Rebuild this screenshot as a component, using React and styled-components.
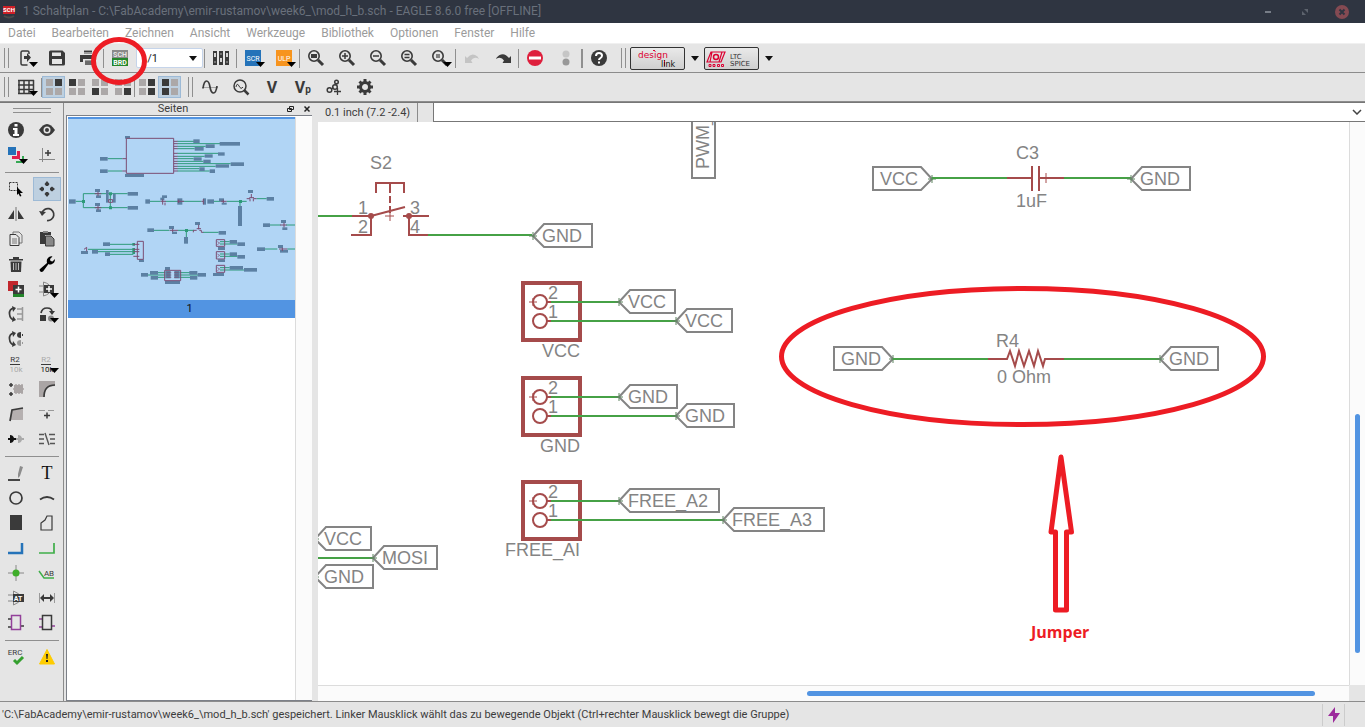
import { useState } from "react"
import styled, { createGlobalStyle } from "styled-components"

const DARK = "#3a3a3a"
const GREY = "#8f8f8f"
const RED = "#ed1c24"

const IconText = styled.text`
font-family: Roboto, "Liberation Sans", sans-serif;
font-size: ${props => props.$size}px;
font-weight: ${props => props.$bold ? 700 : 400};
text-anchor: middle;`

const icons = {
    export: <>
        <path d="M11 4V2.500q0-1.500-1.500-1.500H4.500Q3 1 3 2.500v11q0 1.500 1.500 1.500h5" fill="none" stroke={DARK} strokeWidth="1.500" />
        <path d="M6 6h3V3l4 4.500-4 4.500V9H6z" fill={DARK} />
    </>,
    save: <path fillRule="evenodd" fill={DARK} d="M0 2q0-1.500 1.500-1.500h12L16 3v11q0 1.500-1.500 1.500h-13Q0 15.500 0 14zM3 2.500V6h9V2.500zM3 9v5h10V9z" />,
    print: <>
        <path d="M4 0h8v4H4zM5 10h7v5H5z" fill="#9a9a9a" />
        <path d="M0 5h16v7h-3V9H3v3H0z" fill={DARK} />
        <path d="M4 1.500h8M5 12h7M5 14h7" stroke={DARK} />
    </>,
    schbrd: <>
        <rect width="16" height="8" fill="#8a8a8a" />
        <rect y="8" width="16" height="8" fill="#23862b" />
        <IconText x="8" y="7" $size={7} $bold fill="#e8e8e8">SCH</IconText>
        <IconText x="8" y="15" $size={7} $bold fill="#fff">BRD</IconText>
    </>,
    sheets: <>
        <path d="M0 1h4v14H0zM6 1h4v14H6zM12 1h4v14h-4z" fill={DARK} />
        <path d="M1 3h2v4H1zM7 8h2v4H7zM13 3h2v4h-2z" fill="#d5d5d5" />
        <path d="M1 12h2M7 4h2M13 12h2" stroke="#aaa" />
    </>,
    scr: <>
        <rect width="16" height="16" fill="#2573b9" />
        <IconText x="8" y="11" $size={7} fill="#fff">SCR</IconText>
    </>,
    ulp: <>
        <rect width="16" height="16" fill="#f7941e" />
        <IconText x="8" y="11" $size={7} fill="#fff">ULP</IconText>
    </>,
    zoomfit: <><Lens /><path d="M3 4h6v4H3z" fill={DARK} /></>,
    zoomin: <><Lens /><path d="M3 6h6M6 3v6" stroke={DARK} strokeWidth="1.500" /></>,
    zoomout: <><Lens /><path d="M3 6h6" stroke={DARK} strokeWidth="1.500" /></>,
    zoomredraw: <><Lens /><path d="M3.500 4.500h5M3.500 7.500h5" stroke={DARK} strokeWidth="1.500" /></>,
    zoomsel: <><Lens /><path d="M4 4h4v4H4z" fill={DARK} opacity=".6" /></>,
    undo: <path d="M1 13V6l2 2q4-5 8-3 3 1 4 4-5-3-8 1.500l1.500 2.500z" fill="#c4c4c4" />,
    redo: <path d="M16 13V6l-2 2Q10 3 6 4.500 2 6 1 9q5-3 8 1.500L7.500 13z" fill={DARK} />,
    stop: <><circle cx="8" cy="8" r="8" fill="#de1f3c" /><path d="M2 6.500h12v3H2z" fill="#fff" /></>,
    lights: <><circle cx="8" cy="4" r="3.500" fill="#c6c6c6" /><circle cx="8" cy="12" r="3.500" fill="#989898" /></>,
    help: <>
        <circle cx="8" cy="8" r="8" fill={DARK} />
        <path d="M5 6q0-3 3-3t3 2.500Q11 7 9.500 8 8 9 8 10" fill="none" stroke="#fff" strokeWidth="2" />
        <path d="M7 11.500h2v2H7z" fill="#fff" />
    </>,
    grid: <path d="M1 1v14M6 1v14M11 1v14M15.500 1v14M0 1.500h16M0 6h16M0 10.500h16M0 14.500h16" stroke={DARK} strokeWidth="1.500" />,
    wave: <>
        <path d="M0 8.500h16" stroke="#a5a5a5" />
        <path d="M1 9.500Q2 2 4.500 2T8 8t3.500 6T15 7" fill="none" stroke={DARK} strokeWidth="1.700" />
    </>,
    probe: <>
        <circle cx="7" cy="7" r="6" fill="none" stroke={DARK} strokeWidth="1.500" />
        <path d="M3 8q1-5 3-1t4 1" fill="none" stroke={DARK} />
        <path d="M11 11l4.500 4.500" stroke={DARK} strokeWidth="2.500" />
    </>,
    volt: <IconText x="8" y="14" $size={16} $bold fill={DARK}>V</IconText>,
    vp: <>
        <IconText x="5" y="14" $size={16} $bold fill={DARK}>V</IconText>
        <IconText x="13" y="14" $size={10} $bold fill={DARK}>p</IconText>
    </>,
    link: <>
        <circle cx="3.500" cy="11" r="2.300" fill="none" stroke={DARK} strokeWidth="1.500" />
        <circle cx="9" cy="8" r="2.300" fill="none" stroke={DARK} strokeWidth="1.500" />
        <circle cx="10.500" cy="3" r="1.800" fill="none" stroke={DARK} strokeWidth="1.500" />
        <path d="M5 10l3-1M10 6v-1M11.500 9v7M8 12.500h7" stroke={DARK} strokeWidth="1.300" />
    </>,
    gear: <>
        <circle cx="8" cy="8" r="4.500" fill="none" stroke={DARK} strokeWidth="3" />
        <path d="M8 0v3M8 13v3M0 8h3M13 8h3M2.500 2.500l2 2M11.500 11.500l2 2M2.500 13.500l2-2M11.500 4.500l2-2" stroke={DARK} strokeWidth="3" />
    </>,
    info: <>
        <circle cx="8" cy="8" r="8" fill={DARK} />
        <path d="M6.500 2h3v2.500h-3zM5 6h4.500v6H11v2H5v-2h1.500V8H5z" fill="#fff" />
    </>,
    eye: <>
        <path d="M0 8q8-12 16 0-8 12-16 0z" fill={DARK} />
        <circle cx="8" cy="8" r="3.500" fill="#e5e5e5" />
        <circle cx="8" cy="8" r="2" fill={DARK} />
    </>,
    layers: <>
        <path d="M0 0h8v8H0z" fill="#2573b9" />
        <path d="M4 9h8v3H4zM9 4h3v8H9z" fill="#e0204f" />
        <path d="M8 14h8v2H8zM14 9h2v7h-2z" fill="#35a853" />
    </>,
    mark: <>
        <path d="M3.500 1v14M0 12.500h16" stroke="#888" />
        <path d="M6 6h6M9 3v6" stroke={DARK} strokeWidth="1.500" />
    </>,
    group: <>
        <path d="M1.500 1.500h8v8h-8z" fill="none" stroke={DARK} strokeDasharray="2 1" />
        <path d="M9 6l6 6h-3l1.500 3-1.500.500-1.500-3L9 14z" fill="#000" />
    </>,
    move: <path d="M8 0l2.500 3L9 5H7L5.500 3zM8 16l2.500-3L9 11H7l-1.500 2zM0 8l3-2.500L5 7v2l-2 1.500zM16 8l-3-2.500L11 7v2l2 1.500z" fill={DARK} />,
    mirror: <>
        <path d="M8 1v14" stroke="#999" strokeWidth="1.500" />
        <path d="M6 4v9H0zM10 4v9h6z" fill={DARK} />
    </>,
    rotate: <>
        <path d="M3 7a6 6 0 1 1 5 7.500" fill="none" stroke={DARK} strokeWidth="1.700" />
        <path d="M0 5l3 5 4-4z" fill={DARK} />
    </>,
    copy: <>
        <path d="M5 3V1h6l3 3v8h-3" fill="none" stroke="#777" />
        <path d="M2 3.500h6l3 3v8H2z" fill="#e9e9e9" stroke={DARK} />
        <path d="M4 8h5M4 10h5M4 12h5" stroke="#777" />
    </>,
    paste: <>
        <path d="M1 1h11v3H6v9H1z" fill={DARK} />
        <path d="M6.500 5H12l3 3v7H6.500z" fill="#888" stroke={DARK} />
        <path d="M4 0h5v2H4z" fill="#888" />
    </>,
    trash: <>
        <path d="M1 3h14v1.500H1zM5 1h6v2H5z" fill={DARK} />
        <path d="M2.500 5.500h11L13 16H3z" fill={DARK} />
        <path d="M5.500 7v7M8 7v7M10.500 7v7" stroke="#bbb" />
    </>,
    wrench: <path d="M1 13l7-6q-1-4 2-6 2-1 3.500-.500L11 3l.500 2 2 .500L16 3q0 4-3 5-2 1-3.500 0L4 15.500q-2 1-3-.500t0-2z" fill="#000" />,
    add: <>
        <path d="M0 0h10v10H0z" fill="#c1272d" />
        <path d="M5 12h11v4H5z" fill="#23862b" />
        <path d="M5 4h11v9H5z" fill={DARK} />
        <path d="M7.500 8.500h6M10.500 5.500v6" stroke="#fff" strokeWidth="1.500" />
    </>,
    invoke: <>
        <path d="M0 5h5M0 11h5M4.500 1v14q7-2 8-7-1-5-8-7z" fill="none" stroke="#888" />
        <path d="M5 4h10v8H5z" fill={DARK} />
        <path d="M7 8h6M10 5v6" stroke="#fff" strokeWidth="1.500" />
    </>,
    pinswap: <>
        <path d="M6 2Q1 3 1.500 8T6 14" fill="none" stroke={DARK} strokeWidth="1.700" />
        <path d="M4 0l4 2-3 4zM4 16l4-2-3-4z" fill={DARK} />
        <path d="M9 3h6M9 8h6M9 13h6M14.500 1v14" stroke="#999" strokeWidth="1.500" />
    </>,
    replace: <>
        <path d="M2 7q1-5 6-5t5 4" fill="none" stroke={DARK} strokeWidth="1.700" />
        <path d="M10 5h6l-3 4zM1 9h6v6H1z" fill={DARK} />
        <circle cx="12" cy="12.500" r="3" fill="#888" />
    </>,
    gateswap: <>
        <path d="M6 2Q1 3 1.500 8T6 14" fill="none" stroke={DARK} strokeWidth="1.700" />
        <path d="M4 0l4 2-3 4zM4 16l4-2-3-4z" fill={DARK} />
        <path d="M13 1v6q-4 0-4-3t4-3zM14 3v2h1V3z" fill={DARK} />
        <path d="M13 9v6q-4 0-4-3t4-3zM14 11v2h1v-2z" fill="#999" />
    </>,
    name: <>
        <IconText x="7" y="6" $size={8} fill={DARK}>R2</IconText>
        <path d="M2 8.500h10" stroke={DARK} />
        <IconText x="8" y="16" $size={8} fill="#aaa">10k</IconText>
    </>,
    value: <>
        <IconText x="7" y="6" $size={8} fill="#aaa">R2</IconText>
        <path d="M2 8.500h10" stroke={DARK} />
        <IconText x="8" y="16" $size={8} fill="#111">10k</IconText>
    </>,
    smash: <>
        <path d="M1 4h4M3 2v4M1 13h4M3 11v4" stroke={DARK} strokeWidth="1.500" />
        <path d="M6 4h9v8H6z" fill="#aaa5a5" />
        <path d="M8 4v-1M11 4v-1M14 4v-1M8 13v-1M11 13v-1M14 13v-1M5 8h11" stroke="#aaa5a5" strokeWidth="1.500" />
    </>,
    miter: <>
        <path d="M0 0h16v5Q5 5 5 16H0z" fill="#aaa5a5" />
        <path d="M5 16Q5 4 16 4" fill="none" stroke={DARK} strokeWidth="1.700" />
    </>,
    split: <>
        <path d="M4 4l11-2v12H2z" fill="#b5b0b0" />
        <path d="M2 15L4 4l11-2" fill="none" stroke={DARK} strokeWidth="1.700" />
    </>,
    optimize: <>
        <path d="M0 4.500h6M9 4.500h6" stroke="#999" />
        <path d="M5 9.500h6M8 6.500v6" stroke={DARK} strokeWidth="1.500" />
    </>,
    gates: <>
        <path d="M0 7h2V4q3 0 4 3h2v2H6q-1 3-4 3V9H0z" fill="#111" />
        <path d="M8 7h2V4q3 0 4 3h2v2h-2q-1 3-4 3V9H8z" fill="#aaa" />
    </>,
    ripup: <path d="M0 3.500h5M0 8h5M0 12.500h5M6 2l4 12M10 3.500h6M11 8h5M11 12.500h5" stroke="#555" strokeWidth="1.400" fill="none" />,
    wire: <>
        <path d="M0 15h12" stroke="#111" strokeWidth="1.500" />
        <path d="M12 1l3 1-3 9-2 2v-4z" fill="#8c8c8c" />
    </>,
    text: <SerifText x="8" y="14" fill="#111">T</SerifText>,
    circle: <circle cx="8" cy="8" r="6" fill="none" stroke={DARK} strokeWidth="1.700" />,
    arc: <path d="M1 9.500q7-5 14 0" fill="none" stroke={DARK} strokeWidth="1.800" />,
    rect: <path d="M2 0h12v15H2z" fill={DARK} />,
    polygon: <path d="M2 15V8l4-3 2-4h5v14z" fill="none" stroke={DARK} strokeWidth="1.200" />,
    bus: <path d="M0 13h14V3" fill="none" stroke="#2573b9" strokeWidth="2.500" />,
    net: <path d="M0 13h15V3" fill="none" stroke="#3fae49" strokeWidth="1.700" />,
    junction: <>
        <path d="M8 0v16M0 8h16" stroke="#888" />
        <circle cx="8" cy="8" r="3.500" fill="#3fae2a" />
    </>,
    label: <>
        <path d="M0 6l5 7h10" fill="none" stroke="#3fae49" strokeWidth="1.500" />
        <IconText x="10" y="11" $size={8} fill={DARK}>AB</IconText>
    </>,
    attribute: <>
        <path d="M0 5h5M0 11h5M5.500 1v14q6-2 8-7-2-5-8-7z" fill="none" stroke="#888" />
        <path d="M5 4h11v8H5z" fill={DARK} />
        <IconText x="10" y="11" $size={7} $bold fill="#fff">AT</IconText>
    </>,
    dimension: <>
        <path d="M.500 3v10M15.500 3v10" stroke="#999" />
        <path d="M1 8l4-4v3h6V4l4 4-4 4V9H5v3z" fill={DARK} />
    </>,
    module: <>
        <path d="M0 4h3M0 12h3M13 11h3" stroke={DARK} strokeWidth="1.500" />
        <path d="M3.500.500h9v14h-9z" fill="none" stroke="#93409a" strokeWidth="1.500" />
    </>,
    port: <>
        <path d="M0 4h3M0 12h3M13 11h3" stroke="#93409a" strokeWidth="1.500" />
        <path d="M3.500.500h9v14h-9z" fill="none" stroke={DARK} strokeWidth="1.500" />
    </>,
    erc: <>
        <IconText x="7" y="6" $size={8} fill={DARK}>ERC</IconText>
        <path d="M6 11l3 3 6-6" fill="none" stroke="#35a02f" strokeWidth="3" />
    </>,
    errors: <>
        <path d="M8 .500L15.500 15H.500z" fill="#fecc00" stroke="#fecc00" strokeLinejoin="round" />
        <path d="M7 5h2l-.500 5h-1zM7 11h2v2H7z" fill="#222" />
    </>
}

const toolGroups = [
    [
        { icon: "info" }, { icon: "eye" },
        { icon: "layers", arrow: true }, { icon: "mark" }
    ],
    [
        { icon: "group" }, { icon: "move", active: true },
        { icon: "mirror" }, { icon: "rotate" },
        { icon: "copy" }, { icon: "paste" },
        { icon: "trash" }, { icon: "wrench" },
        { icon: "add" }, { icon: "invoke", arrow: true },
        { icon: "pinswap" }, { icon: "replace", arrow: true },
        { icon: "gateswap" }, null,
        { icon: "name" }, { icon: "value", arrow: true },
        { icon: "smash" }, { icon: "miter" },
        { icon: "split" }, { icon: "optimize" },
        { icon: "gates" }, { icon: "ripup" }
    ],
    [
        { icon: "wire" }, { icon: "text" },
        { icon: "circle" }, { icon: "arc" },
        { icon: "rect" }, { icon: "polygon" },
        { icon: "bus" }, { icon: "net" },
        { icon: "junction" }, { icon: "label" },
        { icon: "attribute" }, { icon: "dimension" },
        { icon: "module" }, { icon: "port" }
    ],
    [{ icon: "erc" }, { icon: "errors" }]
]

const menus = ["Datei", "Bearbeiten", "Zeichnen", "Ansicht", "Werkzeuge", "Bibliothek", "Optionen", "Fenster", "Hilfe"]

function SerifText(props) {
    return <text fontFamily="Liberation Serif, serif" fontSize="18" textAnchor="middle" {...props} />
}

function Lens() {
    return <>
        <circle cx="6" cy="6" r="5.200" fill="none" stroke={DARK} strokeWidth="1.600" />
        <path d="M10 10l5 5" stroke={DARK} strokeWidth="3" />
    </>
}

function Tool({ icon, arrow, active, narrow, children }) {
    return <ToolButton type="button" aria-label={icon} $active={active} $narrow={narrow}>
        <Glyph viewBox="0 0 16 16">
            {icons[icon]}
            {arrow && <path d="M11 12h9l-4.500 5z" fill="#000" />}
        </Glyph>
        {children}
    </ToolButton>
}

// four squares, the dark ones show which quadrants are picked
function Quad({ dark, active }) {
    const spots = [[0, 0], [9, 0], [0, 9], [9, 9]]
    return <ToolButton type="button" aria-label="quad" $active={active} $narrow>
        <Glyph viewBox="0 0 16 16">
            {spots.map(([x, y], i) => (
                <rect key={i} x={x} y={y} width="7" height="7" fill={dark.includes(i) ? DARK : "#aca8a8"} />
            ))}
        </Glyph>
    </ToolButton>
}

function Tag({ x, y, end, text }) {
    const dir = end > x ? 1 : -1
    const neck = x + dir * 11
    return <g>
        <Outline d={`M${x} ${y}L${neck} ${y - 12}H${end}V${y + 11}H${neck}Z`} />
        <path d={`M${x} ${y - 4}v8M${x - 4} ${y}h8`} stroke="#5f8560" />
        <Label x={dir > 0 ? x + 9 : end + 7} y={y + 6}>{text}</Label>
    </g>
}

function Connector({ y, name, tags }) {
    return <g>
        <Part d={`M523 ${y - 19}h57v57h-57z`} $width={4} />
        {tags.map((tag, i) => (
            <g key={i}>
                <Wire d={`M549 ${y + i * 19}H${tag.x}`} />
                <Part d={`M547 ${y + i * 19}h4`} />
                <circle cx="540" cy={y + i * 19} r="7" fill="none" stroke="#a54b4b" strokeWidth="2" />
                <Label x="548" y={y + i * 19 - 3}>{2 - i}</Label>
                <Tag x={tag.x} y={y + i * 19} end={tag.end} text={tag.text} />
            </g>
        ))}
        <Part d={`M529 ${y}h8M533 ${y - 4}v8`} $width={1} />
        <Label x="580" y={y + 55} textAnchor="end">{name}</Label>
    </g>
}

function Schematic() {
    return <Drawing>
        <g transform="translate(-318 -122)">
            <Outline d="M692 110V178H715V110" />
            <Label transform="translate(709 169) rotate(-90)">PWM_</Label>

            <Label x="370" y="169">S2</Label>
            <Wire d="M318 216H353M428 235H532" />
            <Part d="M376 193V183H404V193M390 183V193M390 196V203M390 206V213M352 216H371V235H351M371 216L405 207M403 216H429M409 216V235H428" />
            <Part d="M385 216h9M390 212v9" $width={1} />
            <circle cx="371" cy="216" r="3" fill="#a54b4b" />
            <circle cx="409" cy="216" r="3" fill="#a54b4b" />
            <Label x="358" y="214">1</Label>
            <Label x="358" y="233">2</Label>
            <Label x="410" y="214">3</Label>
            <Label x="410" y="233">4</Label>
            <Tag x={533} y={236} end={592} text="GND" />

            <Connector y={302} name="VCC" tags={[{ x: 619, end: 675, text: "VCC" }, { x: 676, end: 732, text: "VCC" }]} />
            <Connector y={397} name="GND" tags={[{ x: 619, end: 677, text: "GND" }, { x: 676, end: 734, text: "GND" }]} />
            <Connector y={501} name="FREE_AI" tags={[{ x: 619, end: 719, text: "FREE_A2" }, { x: 723, end: 824, text: "FREE_A3" }]} />

            <Wire d="M318 558H373" />
            <Tag x={315} y={539} end={371} text="VCC" />
            <Tag x={373} y={558} end={437} text="MOSI" />
            <Tag x={315} y={577} end={373} text="GND" />

            <Tag x={932} y={179} end={873} text="VCC" />
            <Wire d="M932 178H1007M1064 178H1131" />
            <Part d="M1007 178H1032M1032 166V191M1039 166V191M1039 178H1064" />
            <Part d="M1046 173v10" $width={1} />
            <Label x="1016" y="159">C3</Label>
            <Label x="1016" y="207">1uF</Label>
            <Tag x={1131} y={179} end={1190} text="GND" />

            <Tag x={893} y={359} end={834} text="GND" />
            <Wire d="M893 359H988M1064 359H1160" />
            <Part d="M988 359H1007L1010 351 1015 366 1019 351 1024 366 1029 351 1034 366 1038 351 1043 366 1045 359H1064" />
            <Label x="996" y="347">R4</Label>
            <Label x="997" y="383">0 Ohm</Label>
            <Tag x={1160} y={359} end={1218} text="GND" />

            <ellipse cx="1022.500" cy="356.500" rx="241" ry="68" fill="none" stroke={RED} strokeWidth="5" />
            <path d="M1061 457L1051 532H1055.500V610H1066.500V532H1071.500Z" fill="none" stroke={RED} strokeWidth="5" strokeLinejoin="round" />
            <Note x="1031" y="638">Jumper</Note>
        </g>
    </Drawing>
}

function Thumbnail() {
    const boxes = [
        [183, 108, 15, 8], [183, 222, 57, 9], [108, 171, 23, 11], [108, 208, 23, 11],
        [388, 118, 19, 11], [467, 126, 61, 11], [425, 133, 27, 11], [392, 141, 27, 11],
        [462, 157, 20, 10], [422, 163, 24, 10], [389, 172, 24, 10], [418, 179, 22, 10],
        [500, 187, 40, 11], [455, 193, 40, 10], [406, 202, 16, 11], [437, 208, 16, 11],
        [15, 298, 20, 13], [93, 267, 15, 9], [96, 286, 15, 8], [93, 309, 15, 9], [96, 328, 15, 8],
        [126, 270, 8, 38], [147, 281, 8, 27], [191, 276, 31, 11], [191, 318, 31, 11],
        [244, 298, 14, 13], [294, 286, 15, 8], [289, 293, 12, 8], [340, 295, 15, 19], [417, 295, 9, 19],
        [430, 298, 20, 13], [465, 295, 15, 9], [473, 308, 15, 6], [552, 270, 15, 9], [608, 291, 22, 11],
        [522, 318, 12, 60], [250, 385, 20, 11], [315, 378, 15, 9], [324, 395, 15, 7], [393, 366, 15, 9],
        [464, 393, 22, 11], [360, 411, 12, 20], [597, 370, 21, 11], [651, 360, 15, 9], [655, 382, 15, 8],
        [579, 442, 24, 11], [642, 435, 15, 9], [648, 450, 24, 8],
        [117, 427, 21, 11], [84, 450, 18, 11], [51, 453, 21, 9], [123, 457, 15, 11], [225, 478, 15, 8],
        [497, 420, 22, 11], [520, 427, 23, 11], [462, 441, 21, 9],
        [497, 457, 22, 11], [520, 465, 23, 11], [462, 478, 21, 8],
        [497, 498, 40, 11], [540, 504, 39, 11], [447, 519, 33, 9],
        [231, 519, 21, 11], [258, 513, 24, 11], [260, 528, 22, 11], [303, 501, 15, 9], [303, 543, 45, 9],
        [376, 513, 24, 11], [378, 528, 22, 11], [401, 519, 25, 11], [304, 513, 16, 22], [331, 513, 16, 22]
    ]
    return <Preview viewBox="12 57 681 543">
        <g stroke="#2d9a79" strokeWidth="3" fill="none">
            <path d="M131 176H175M131 213H175M340 124H390M340 131H468M340 139H425M340 146H392M340 160H462M340 169H422M340 176H389M340 184H418M340 191H500M340 199H455M340 206H406M340 213H437" />
            <path d="M35 304H58M58 281V323M58 281H191M58 323H191M139 281V323M258 304H290M305 304H412M450 304H470M488 304H548M578 296H608M528 304V320" />
            <path d="M270 391H316M342 391H390M367 391V412M417 397H464M618 375H650M666 375H693M603 447H640M670 447H693" />
            <path d="M138 433H208M72 448H208M102 455H208M138 463H208M468 425H497M468 432H520M468 462H497M468 469H520M468 503H497M468 510H540M252 525H304M280 518H304M280 532H304M346 518H378M346 525H402M346 532H378" />
        </g>
        <g fill="#2d9a79">
            <path d="M54 300h9v9h-9zM135 277h9v9h-9zM135 319h9v9h-9zM525 300h9v9h-9zM363 387h9v9h-9zM205 429h8v8h-8zM205 444h8v18h-8z" />
        </g>
        <g fill="#5c80a3">
            {boxes.map(([x, y, w, h], i) => <rect key={i} x={x} y={y} width={w} height={h} />)}
        </g>
        <g stroke="#7b4d73" strokeWidth="3" fill="none">
            <path d="M187 115H329V220H187ZM175 176H187M175 213H187M329 124h12M329 131h12M329 139h12M329 146h12M329 160h12M329 169h12M329 176h12M329 184h12M329 191h12M329 199h12M329 206h12M329 213h12" />
            <path d="M92 281H112M102 275V288M92 323H112M102 317V330M134 299h12v8h-12zM290 304H306M296 298V314M303 308v8M340 304h20M344 299v10M412 304h5M418 297v16M470 304h18M478 299v10M548 296H558V304M568 304V296H578M556 293H570M562 282V294" />
            <path d="M317 391h25M326 386v10M388 397V391H398M406 391H412V397H418M398 386H411M404 374V388M60 448L68 442V454M648 375h20M660 368V382M645 447h25M655 443v10" />
            <path d="M220 424H238V478H220ZM208 433H226M208 448H226M208 455H226M208 469H226M457 419H482V439H457ZM457 455H482V477H457ZM457 496H482V517H457ZM302 511H350V542H302Z" />
            <path d="M460 425l7 4-7 5M460 462l7 4-7 5M460 503l7 4-7 5M308 518H322M308 525H322M308 532H322M330 518H344M330 525H344M330 532H344" strokeWidth="2" />
        </g>
    </Preview>
}

export default function App() {
    const [sheet, setSheet] = useState("1/1")
    const [command, setCommand] = useState("")

    return <Window>
        <GlobalStyle />
        <TitleBar>
            <AppIcon viewBox="0 0 14 14">
                <path d="M2 11q5 3 10 0" fill="none" stroke="#4a4a4a" strokeWidth="2" />
                <rect x="1" y="1" width="12" height="8" fill="#cf2027" />
                <IconText x="7" y="7" $size={6} $bold fill="#fff">SCH</IconText>
            </AppIcon>
            <Title>1 Schaltplan - C:\FabAcademy\emir-rustamov\week6_\mod_h_b.sch - EAGLE 8.6.0 free [OFFLINE]</Title>
            <WindowButton type="button" aria-label="Minimieren">
                <Glyph viewBox="0 0 16 16"><path d="M5 8h6" stroke="#777d87" strokeWidth="2" /></Glyph>
            </WindowButton>
            <WindowButton type="button" aria-label="Maximieren">
                <Glyph viewBox="0 0 16 16"><path d="M7 5h4v4zM5 7v4h4z" fill="#5d636d" /></Glyph>
            </WindowButton>
            <WindowButton type="button" aria-label="Schließen">
                <Glyph viewBox="0 0 16 16">
                    <circle cx="8" cy="8" r="7" fill="#844a52" />
                    <path d="M5.500 5.500l5 5M10.500 5.500l-5 5" stroke="#2f3541" strokeWidth="2" />
                </Glyph>
            </WindowButton>
        </TitleBar>

        <MenuBar>
            {menus.map(menu => <MenuItem key={menu} type="button">{menu}</MenuItem>)}
        </MenuBar>

        <Toolbar>
            <Grip />
            <Tool icon="export" arrow />
            <Tool icon="save" />
            <Tool icon="print" />
            <Divider />
            <Tool icon="schbrd">
                <Highlight viewBox="0 0 56 48">
                    <ellipse cx="28" cy="24" rx="25.500" ry="21.500" fill="none" stroke={RED} strokeWidth="5" />
                </Highlight>
            </Tool>
            <SheetBox>
                <SheetSelect aria-label="Seite" value={sheet} onChange={e => setSheet(e.target.value)}>
                    <option>1/1</option>
                </SheetSelect>
                <Caret viewBox="0 0 8 5"><path d="M0 0h8L4 5z" /></Caret>
            </SheetBox>
            <Divider />
            <Tool icon="sheets" />
            <Divider />
            <Tool icon="scr" arrow />
            <Tool icon="ulp" arrow />
            <Divider />
            <Tool icon="zoomfit" />
            <Tool icon="zoomin" />
            <Tool icon="zoomout" />
            <Tool icon="zoomredraw" />
            <Tool icon="zoomsel" arrow />
            <Divider />
            <Tool icon="undo" />
            <Tool icon="redo" />
            <Divider />
            <Tool icon="stop" />
            <Tool icon="lights" />
            <Divider $thick />
            <Tool icon="help" />
            <Grip />
            <Brands>
                <BrandButton type="button" aria-label="designlink">
                    <Logo viewBox="0 0 53 21">
                        <LogoText x="7" y="10" $size={9} fill="#dc0032">design</LogoText>
                        <path d="M22 2.500h2M33.500 12v6" stroke="#dc0032" />
                        <LogoText x="30" y="19" $size={8} fill="#111">link</LogoText>
                    </Logo>
                </BrandButton>
                <BrandArrow type="button" aria-label="designlink Menü"><Caret viewBox="0 0 8 5"><path d="M0 0h8L4 5z" /></Caret></BrandArrow>
                <BrandButton type="button" aria-label="LTC Spice">
                    <Logo viewBox="0 0 53 21">
                        <path d="M6 4H20L16 14H2ZM7 4l-2 10M17 4l-3 10" fill="none" stroke="#dc0032" strokeWidth="1.200" />
                        <circle cx="11" cy="9" r="2.500" fill="none" stroke="#dc0032" strokeWidth="1.500" />
                        <path d="M4 16.500h2v2H4zM8 16.500h2v2H8zM12.500 16.500h2v2h-2zM16.500 16.500h2v2h-2z" fill="none" stroke="#dc0032" />
                        <LogoText x="25" y="11" $size={7} fill="#333">LTC</LogoText>
                        <LogoText x="25" y="18" $size={7} fill="#333">SPICE</LogoText>
                    </Logo>
                </BrandButton>
                <BrandArrow type="button" aria-label="LTC Spice Menü"><Caret viewBox="0 0 8 5"><path d="M0 0h8L4 5z" /></Caret></BrandArrow>
            </Brands>
        </Toolbar>

        <Toolbar>
            <Grip />
            <Tool icon="grid" arrow />
            <Divider />
            <Quad dark={[1]} active />
            <Quad dark={[0]} />
            <Quad dark={[2]} />
            <Quad dark={[3]} />
            <Divider />
            <Quad dark={[1, 3]} />
            <Quad dark={[0, 2]} active />
            <Grip />
            <Tool icon="wave" />
            <Tool icon="probe" />
            <Tool icon="volt" />
            <Tool icon="vp" />
            <Tool icon="link" />
            <Tool icon="gear" />
        </Toolbar>

        <Content>
            <Palette>
                <PaletteGrip />
                {toolGroups.map((group, i) => (
                    <ToolGrid key={i}>
                        {group.map((tool, j) => tool ? <Tool key={j} {...tool} narrow /> : <span key={j} />)}
                    </ToolGrid>
                ))}
            </Palette>

            <Sheets>
                <SheetsHead>
                    <SheetsTitle>Seiten</SheetsTitle>
                    <PanelButton type="button" aria-label="Abdocken">
                        <Small viewBox="0 0 8 8"><path d="M2.500 1.500h4v3h-4zM.500 3.500h4v3h-4z" fill="none" stroke="#222" /></Small>
                    </PanelButton>
                    <PanelButton type="button" aria-label="Panel schließen">
                        <Small viewBox="0 0 8 8"><path d="M1.500 1.500l5 5M6.500 1.500l-5 5" stroke="#222" strokeWidth="1.500" /></Small>
                    </PanelButton>
                </SheetsHead>
                <SheetList>
                    <SheetItem>
                        <Thumbnail />
                        <SheetNumber>1</SheetNumber>
                    </SheetItem>
                    <ListTrack />
                </SheetList>
            </Sheets>

            <Editor>
                <CommandRow>
                    <Coordinates>0.1 inch (7.2 -2.4)</Coordinates>
                    <CommandBox>
                        <CommandInput aria-label="Befehl" value={command} onChange={e => setCommand(e.target.value)} />
                        <Chevron viewBox="0 0 10 6"><path d="M1 1l4 4 4-4" fill="none" stroke="#444" strokeWidth="1.500" /></Chevron>
                    </CommandBox>
                </CommandRow>
                <Board>
                    <Schematic />
                    <VTrack><VThumb /></VTrack>
                    <HTrack><HThumb /></HTrack>
                </Board>
            </Editor>
        </Content>

        <StatusBar>
            <StatusText>'C:\FabAcademy\emir-rustamov\week6_\mod_h_b.sch' gespeichert. Linker Mausklick wählt das zu bewegende Objekt (Ctrl+rechter Mausklick bewegt die Gruppe)</StatusText>
            <StatusIcon>
                <Glyph viewBox="0 0 16 16"><path d="M9 0L2 9h5v7l7-10H9z" fill="#9c2a9c" /></Glyph>
            </StatusIcon>
        </StatusBar>
    </Window>
}

const GlobalStyle = createGlobalStyle`
* { box-sizing: border-box; }
body {
    margin: 0;
    font-family: Roboto, "Noto Sans", sans-serif;
    font-size: 11px;
    color: #3c3c3c;
}
button, select, input {
    font: inherit;
    color: inherit;
    padding: 0;
    border: 0;
    background: none;
}
svg { display: block; flex-shrink: 0; }
`

const Window = styled.div`
min-height: 100vh;
display: flex;
flex-direction: column;
background-color: #e5e5e5;`

const TitleBar = styled.header`
height: 23px;
display: flex;
align-items: center;
padding-left: 2px;
padding-right: 5px;
background-color: #2f3541;`

const AppIcon = styled.svg`
width: 14px;
height: 14px;`

const Title = styled.div`
flex: 1;
padding-left: 7px;
font-size: 12px;
line-height: 23px;
white-space: nowrap;
color: #69707b;`

const WindowButton = styled.button`
width: 37px;
height: 20px;
display: flex;
justify-content: center;
align-items: center;`

const MenuBar = styled.nav`
height: 21px;
display: flex;
align-items: center;
gap: 16px;
padding-left: 8px;
background-color: #ffffff;
border-bottom: 1px solid #f0f0f0;`

const MenuItem = styled.button`
font-size: 12px;
line-height: 20px;
color: #9b9b9b;`

const Toolbar = styled.div`
height: 29px;
display: flex;
align-items: center;
padding-left: 4px;
border-bottom: 1px solid #8c8c8c;`

const Grip = styled.div`
width: 6px;
height: 20px;
border-left: 1px solid ${GREY};
position: relative;
&::after {
    content: "";
    position: absolute;
    left: 3px;
    height: 20px;
    border-left: 1px solid ${GREY};
}
* + & {
    margin-left: 7px;
}`

const Divider = styled.div`
width: ${props => props.$thick ? 2 : 1}px;
height: 19px;
background-color: ${GREY};`

const ToolButton = styled.button`
position: relative;
width: ${props => props.$narrow ? 23 : 31}px;
height: 22px;
padding-left: 1px;
display: flex;
justify-content: center;
align-items: center;
${props => props.$active && `
    background-color: #bed0e0;
    box-shadow: inset 0 0 0 1px #9dbad6;
`}`

const Glyph = styled.svg`
width: 16px;
height: 16px;
overflow: visible;`

const Highlight = styled.svg`
position: absolute;
z-index: 2;
top: -10px;
left: -13px;
width: 56px;
height: 48px;
pointer-events: none;`

const SheetBox = styled.div`
position: relative;
width: 67px;
margin: 0 1px;
display: flex;
align-items: center;
background-color: #ffffff;
border: 1px solid #c5d4ea;
border-radius: 2px;
> svg {
    position: absolute;
    right: 5px;
    pointer-events: none;
}`

const SheetSelect = styled.select`
appearance: none;
width: 100%;
height: 18px;
padding-left: 4px;
color: #222222;`

const Caret = styled.svg`
width: 8px;
height: 5px;
fill: #111111;`

const Brands = styled.div`
display: flex;
margin-left: 3px;`

const BrandButton = styled.button`
width: 55px;
height: 23px;
border: 1px solid #333333;
border-radius: 2px;
background-image: linear-gradient(#e9e9e9, #cfcfcf);`

const Logo = styled.svg`
width: 53px;
height: 21px;`

const LogoText = styled.text`
font-family: "DejaVu Sans", sans-serif;
font-size: ${props => props.$size}px;`

const BrandArrow = styled.button`
width: 19px;
height: 23px;
display: flex;
justify-content: center;
align-items: center;`

const Content = styled.main`
flex: 1;
display: flex;
border-top: 1px solid #777777;
border-bottom: 1px solid #8c8c8c;`

const Palette = styled.aside`
width: 64px;
padding-top: 5px;
border-right: 1px solid #8c8c8c;`

const PaletteGrip = styled.div`
height: 5px;
margin: 0 12px 5px 13px;
border-top: 1px solid ${GREY};
border-bottom: 1px solid ${GREY};`

const ToolGrid = styled.div`
display: grid;
grid-template-columns: 28px 28px;
grid-auto-rows: 25px;
column-gap: 3px;
padding-left: 2px;
${ToolButton} {
    width: 28px;
    height: 24px;
    padding: 0;
}
& + & {
    margin-top: 4px;
    position: relative;
    padding-top: 5px;
}
& + &::before {
    content: "";
    position: absolute;
    top: 0;
    left: 5px;
    right: 4px;
    border-top: 1px solid ${GREY};
}`

const Sheets = styled.section`
width: 248px;
display: flex;
flex-direction: column;
padding-left: 2px;`

const SheetsHead = styled.div`
height: 12px;
display: flex;
align-items: center;
gap: 6px;`

const SheetsTitle = styled.div`
flex: 1;
line-height: 12px;
text-align: center;`

const PanelButton = styled.button`
width: 10px;
height: 12px;
display: flex;
justify-content: center;
align-items: center;`

const Small = styled.svg`
width: 8px;
height: 8px;`

const SheetList = styled.div`
flex: 1;
display: flex;
justify-content: space-between;
background-color: #ffffff;
border: 1px solid #7c8088;
border-right: 0;
padding: 1px 0 0 1px;`

const SheetItem = styled.div`
align-self: flex-start;
width: 227px;
border-top: 2px solid #5294e2;
background-color: #b1d5f5;`

const Preview = styled.svg`
width: 227px;
height: 181px;`

const SheetNumber = styled.div`
padding-left: 16px;
line-height: 18px;
text-align: center;
color: #111111;
background-color: #5294e2;`

const ListTrack = styled.div`
width: 17px;
border-left: 1px solid #dcdcdc;
background-color: #fbfbfb;`

const Editor = styled.section`
flex: 1;
min-width: 0;
display: flex;
flex-direction: column;
padding-left: 6px;`

const CommandRow = styled.div`
height: 19px;
display: flex;`

const Coordinates = styled.div`
width: 100px;
margin-right: 15px;
padding-left: 7px;
line-height: 20px;
white-space: nowrap;
border-right: 1px solid #8c8c8c;`

const CommandBox = styled.div`
flex: 1;
display: flex;
align-items: center;
padding-right: 3px;
background-color: #ffffff;
border-left: 1px solid #777777;
border-bottom: 1px solid #777777;`

const CommandInput = styled.input`
flex: 1;
height: 18px;
padding-left: 4px;
outline: none;`

const Chevron = styled.svg`
width: 10px;
height: 6px;`

const Board = styled.div`
flex: 1;
display: grid;
grid-template-columns: 1fr 16px;
grid-template-rows: 1fr 16px;`

const Drawing = styled.svg`
width: 100%;
height: 100%;
min-height: 540px;
background-color: #ffffff;`

const Label = styled.text`
font-family: "Liberation Sans", sans-serif;
font-size: 18px;
fill: #848484;`

const Note = styled.text`
font-family: "Open Sans", sans-serif;
font-size: 16px;
font-weight: 700;
fill: ${RED};`

const Outline = styled.path`
fill: none;
stroke: #848484;
stroke-width: 2px;`

const Wire = styled.path`
fill: none;
stroke: #46a146;
stroke-width: 2px;`

const Part = styled.path`
fill: none;
stroke: #a54b4b;
stroke-width: ${props => props.$width || 2}px;`

const VTrack = styled.div`
display: flex;
flex-direction: column;
justify-content: flex-end;
align-items: center;
padding-bottom: 32px;
border-left: 1px solid #dcdcdc;
background-color: #fbfbfb;`

const VThumb = styled.div`
width: 5px;
height: 45%;
border-radius: 3px;
background-color: #5294e2;`

const HTrack = styled.div`
display: flex;
justify-content: flex-end;
align-items: center;
padding-right: 34px;
border-top: 1px solid #dcdcdc;
background-color: #fbfbfb;`

const HThumb = styled.div`
width: 51%;
height: 5px;
border-radius: 3px;
background-color: #5294e2;`

const StatusBar = styled.footer`
height: 25px;
display: flex;
align-items: center;`

const StatusText = styled.div`
flex: 1;
padding-left: 2px;
line-height: 25px;
white-space: nowrap;`

const StatusIcon = styled.div`
width: 23px;
height: 22px;
margin-right: 20px;
display: flex;
justify-content: center;
align-items: center;
border-left: 1px solid #cccccc;
border-right: 1px solid #cccccc;`
